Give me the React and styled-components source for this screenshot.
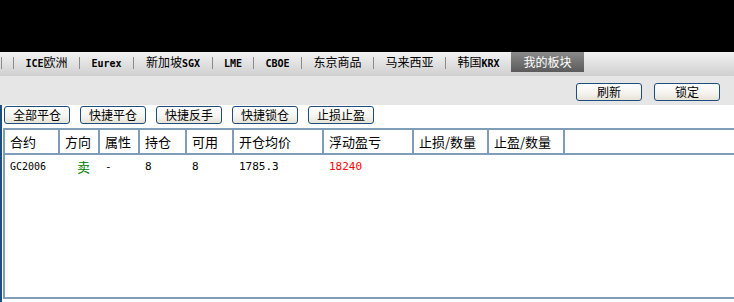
import React from 'react';
import styled, { createGlobalStyle } from 'styled-components';

const GlobalStyle = createGlobalStyle`
  html, body {
    margin: 0;
    padding: 0;
    background: #000;
    overflow: hidden;
  }
  body {
    font-family: "Noto Sans CJK SC", "DejaVu Sans", sans-serif;
    font-size: 12px;
    color: #000;
  }
`;

const Page = styled.div`
  width: 734px;
  height: 302px;
  display: flex;
  flex-direction: column;
  background: #000;
`;

const TopBlack = styled.div`
  height: 52px;
  flex-shrink: 0;
`;

const TabBar = styled.div`
  height: 24px;
  flex-shrink: 0;
  display: flex;
  align-items: flex-start;
  background: linear-gradient(#f2f2f2, #d0cfcf);
  white-space: nowrap;
`;

const Tab = styled.div`
  width: ${(p) => p.$w}px;
  height: 20px;
  line-height: 20px;
  text-align: center;
  flex-shrink: 0;
  color: ${(p) => (p.$active ? '#fff' : '#000')};
  background: ${(p) => (p.$active ? 'linear-gradient(#8a8a8a, #5a5a5a)' : 'transparent')};
  font-size: 12px;
`;

const Latin = styled.span`
  font-family: "DejaVu Sans Mono", monospace;
  font-size: 10px;
  font-weight: bold;
`;

const Sep = styled.span`
  width: 1px;
  height: 12px;
  margin-top: 5px;
  background: #8a8a8a;
  flex-shrink: 0;
`;

const Toolbar = styled.div`
  height: 29px;
  flex-shrink: 0;
  background: #e6e6e6;
  display: flex;
  justify-content: flex-end;
  align-items: flex-start;
  gap: 12px;
  padding: 7px 14px 0 0;
  box-sizing: border-box;
`;

const Button = styled.button`
  width: 66px;
  height: 18px;
  padding: 0;
  border: 1px solid #1c4f7f;
  border-radius: 3px;
  background: linear-gradient(#ffffff, #f4f3ee 60%, #e6e3d6);
  font-family: inherit;
  font-size: 12px;
  line-height: 16px;
  color: #000;
  cursor: pointer;
`;

const Panel = styled.div`
  flex: 1;
  background: #fff;
  border-left: 2px solid #1c4f7f;
  display: flex;
  flex-direction: column;
  padding: 1px 0 3px 1px;
  min-height: 0;
`;

const Actions = styled.div`
  display: flex;
  gap: 10px;
  padding: 0 0 0 1px;
  height: 22px;
  flex-shrink: 0;
`;

const Grid = styled.div`
  flex: 1;
  border-top: 2px solid #7f9db9;
  border-left: 2px solid #7f9db9;
  border-bottom: 2px solid #7f9db9;
  margin-right: -10px;
  display: flex;
  flex-direction: column;
`;

const HeadRow = styled.div`
  display: flex;
  height: 23px;
  border-bottom: 2px solid #7f9db9;
`;

const HeadCell = styled.div`
  width: ${(p) => p.$w}px;
  flex-shrink: 0;
  box-sizing: border-box;
  border-right: 2px solid #7f9db9;
  padding-left: 5px;
  line-height: 23px;
  font-size: 13px;
`;

const DataRow = styled.div`
  display: flex;
  height: 22px;
  align-items: center;
`;

const Cell = styled.div`
  width: ${(p) => p.$w}px;
  flex-shrink: 0;
  box-sizing: border-box;
  padding-left: ${(p) => p.$pad ?? 5}px;
  color: ${(p) => p.$color || '#000'};
  font-family: ${(p) => (p.$cjk ? '"Noto Sans CJK SC", sans-serif' : '"DejaVu Sans Mono", monospace')};
  font-size: ${(p) => p.$size || 11}px;
`;

const tabs = [
  { w: 65, label: ['ICE', '欧洲'] },
  { w: 53, label: ['Eurex'] },
  { w: 78, label: ['新加坡', 'SGX'] },
  { w: 40, label: ['LME'] },
  { w: 47, label: ['CBOE'] },
  { w: 71, label: ['东京商品'] },
  { w: 71, label: ['马来西亚'] },
  { w: 65, label: ['韩国', 'KRX'] },
];

const isLatin = (s) => /^[A-Za-z]+$/.test(s);

const cols = [
  { title: '合约', w: 55 },
  { title: '方向', w: 40 },
  { title: '属性', w: 40 },
  { title: '持仓', w: 47 },
  { title: '可用', w: 47 },
  { title: '开仓均价', w: 90 },
  { title: '浮动盈亏', w: 90 },
  { title: '止损/数量', w: 75 },
  { title: '止盈/数量', w: 76 },
  { title: '', w: 200 },
];

const row = [
  { v: 'GC2006', size: 10 },
  { v: '卖', color: '#008000', pad: 17, size: 13, cjk: true },
  { v: '-' },
  { v: '8' },
  { v: '8' },
  { v: '1785.3' },
  { v: '18240', color: '#ff0000' },
  { v: '' },
  { v: '' },
  { v: '' },
];

export default function App() {
  return (
    <Page>
      <GlobalStyle />
      <TopBlack />
      <TabBar>
        <Sep style={{ marginLeft: 1 }} />
        <Tab $w={11} />
        {tabs.map((t) => (
          <React.Fragment key={t.label.join('')}>
            <Sep />
            <Tab $w={t.w}>
              {t.label.map((part) =>
                isLatin(part) ? <Latin key={part}>{part}</Latin> : <span key={part}>{part}</span>
              )}
            </Tab>
          </React.Fragment>
        ))}
        <Tab $active $w={73}>我的板块</Tab>
      </TabBar>
      <Toolbar>
        <Button>刷新</Button>
        <Button>锁定</Button>
      </Toolbar>
      <Panel>
        <Actions>
          <Button>全部平仓</Button>
          <Button>快捷平仓</Button>
          <Button>快捷反手</Button>
          <Button>快捷锁仓</Button>
          <Button>止损止盈</Button>
        </Actions>
        <Grid>
          <HeadRow>
            {cols.map((c, i) => (
              <HeadCell key={i} $w={c.w}>
                {c.title}
              </HeadCell>
            ))}
          </HeadRow>
          <DataRow>
            {row.map((c, i) => (
              <Cell
                key={i}
                $w={cols[i].w}
                $color={c.color}
                $pad={c.pad}
                $size={c.size}
                $cjk={c.cjk}
              >
                {c.v}
              </Cell>
            ))}
          </DataRow>
        </Grid>
      </Panel>
    </Page>
  );
}
